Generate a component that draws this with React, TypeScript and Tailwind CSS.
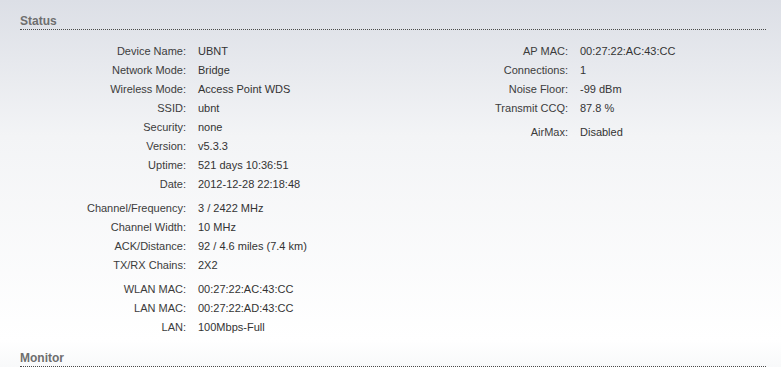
const leftGroups = [
  [
    ["Device Name:", "UBNT"],
    ["Network Mode:", "Bridge"],
    ["Wireless Mode:", "Access Point WDS"],
    ["SSID:", "ubnt"],
    ["Security:", "none"],
    ["Version:", "v5.3.3"],
    ["Uptime:", "521 days 10:36:51"],
    ["Date:", "2012-12-28 22:18:48"],
  ],
  [
    ["Channel/Frequency:", "3 / 2422 MHz"],
    ["Channel Width:", "10 MHz"],
    ["ACK/Distance:", "92 / 4.6 miles (7.4 km)"],
    ["TX/RX Chains:", "2X2"],
  ],
  [
    ["WLAN MAC:", "00:27:22:AC:43:CC"],
    ["LAN MAC:", "00:27:22:AD:43:CC"],
    ["LAN:", "100Mbps-Full"],
  ],
]

const rightGroups = [
  [
    ["AP MAC:", "00:27:22:AC:43:CC"],
    ["Connections:", "1"],
    ["Noise Floor:", "-99 dBm"],
    ["Transmit CCQ:", "87.8 %"],
  ],
  [["AirMax:", "Disabled"]],
]

function InfoTable({ groups, labelWidth }: { groups: string[][][]; labelWidth: string }) {
  return (
    <div className="flex flex-col gap-[5px]">
      {groups.map((rows, gi) => (
        <div key={gi} className="flex flex-col">
          {rows.map(([label, value]) => (
            <div key={label} className="flex h-[19px] items-center">
              <div className={`${labelWidth} text-right text-[#3c3c3c]`}>{label}</div>
              <div className="pl-[12px] text-[#333]">{value}</div>
            </div>
          ))}
        </div>
      ))}
    </div>
  )
}

export default function App() {
  return (
    <div className="w-[781px] h-[371px] overflow-hidden bg-white font-['Liberation_Sans',Arial,sans-serif] text-[11px]">
      <section className="bg-gradient-to-b from-[#dcdfe6] via-[#f3f4f6] via-40% to-white pt-[13px] pb-[3px]">
        <div className="ml-[20px] w-[746px] border-b border-dotted border-[#4a4a4a] h-[17px] leading-[16px] text-[12px] font-bold text-[#6e6e6e]">
          Status
        </div>
        <div className="flex pt-[12px]">
          <div className="w-[393px] pl-[20px]">
            <InfoTable groups={leftGroups} labelWidth="w-[166px]" />
          </div>
          <div className="flex-1">
            <InfoTable groups={rightGroups} labelWidth="w-[175px]" />
          </div>
        </div>
      </section>
      <section className="bg-gradient-to-b from-white to-[#f8f9fa] pt-[10px]">
        <div className="ml-[20px] w-[746px] border-b border-dotted border-[#4a4a4a] h-[17px] leading-[16px] text-[12px] font-bold text-[#6e6e6e]">
          Monitor
        </div>
      </section>
    </div>
  )
}
